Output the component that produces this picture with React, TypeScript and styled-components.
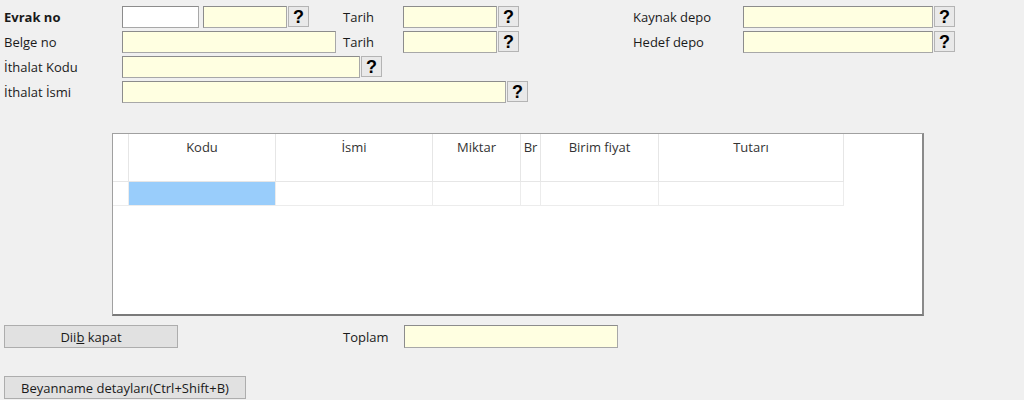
import styled, { createGlobalStyle } from "styled-components";

const GlobalStyle = createGlobalStyle`
  body {
    margin: 0;
    background: #f0f0f0;
    font-family: "Open Sans", "Noto Sans", sans-serif;
    font-size: 13px;
    color: #1a1a1a;
  }
`;

const Page = styled.div`
  width: 1024px;
  height: 400px;
  padding: 6px 0 0 4px;
  box-sizing: border-box;
  overflow: hidden;
`;

const Form = styled.div`
  display: grid;
  grid-template-columns: 118px 221px 60px 230px 110px 260px;
  grid-auto-rows: 22px;
  row-gap: 3px;
`;

const Label = styled.div<{ bold?: boolean }>`
  display: flex;
  align-items: center;
  font-weight: ${(p) => (p.bold ? 700 : 400)};
  white-space: nowrap;
`;

const Field = styled.div<{ span?: number }>`
  display: flex;
  align-items: stretch;
  grid-column: span ${(p) => p.span || 1};
`;

const Input = styled.div<{ w: number; white?: boolean; gapLeft?: number }>`
  width: ${(p) => p.w}px;
  box-sizing: border-box;
  margin-left: ${(p) => p.gapLeft || 0}px;
  background: ${(p) => (p.white ? "#ffffff" : "#ffffe1")};
  border: 1px solid #a8a8a8;
  border-top-color: #8c8c8c;
  border-left-color: #8c8c8c;
`;

const Lookup = styled.div`
  width: 21px;
  height: 21px;
  box-sizing: border-box;
  margin-left: 1px;
  background: #e9e9e9;
  border: 1px solid #b4b4b4;
  display: flex;
  align-items: center;
  justify-content: center;
  font-family: "Liberation Sans", Arial, sans-serif;
  font-weight: 700;
  font-size: 18px;
  line-height: 1;
  color: #000;
`;

const GridBox = styled.div`
  margin: 30px 0 0 108px;
  width: 812px;
  height: 183px;
  box-sizing: border-box;
  background: #fff;
  border: 1px solid #a0a0a0;
  border-bottom: 2px solid #7a7a7a;
  border-right: 2px solid #8a8a8a;
`;

const Table = styled.div`
  display: grid;
  grid-template-columns: 16px 147px 157px 88px 20px 118px 185px;
  grid-template-rows: 48px 24px;
`;

const HeadCell = styled.div`
  border-right: 1px solid #e6e6e6;
  border-bottom: 1px solid #e6e6e6;
  text-align: center;
  padding-top: 4px;
  color: #333;
  white-space: nowrap;
  overflow: hidden;
`;

const Cell = styled.div<{ selected?: boolean }>`
  border-right: 1px solid #ececec;
  border-bottom: 1px solid #ececec;
  background: ${(p) => (p.selected ? "#99cdfb" : "#fff")};
`;

const BottomRow = styled.div`
  display: flex;
  align-items: center;
  margin-top: 9px;
  height: 23px;
`;

const Button = styled.div<{ w: number }>`
  width: ${(p) => p.w}px;
  height: 23px;
  box-sizing: border-box;
  background: #e1e1e1;
  border: 1px solid #adadad;
  display: flex;
  align-items: center;
  justify-content: center;
  color: #1a1a1a;
  white-space: nowrap;
`;

const TotalLabel = styled.div`
  width: 61px;
  margin-left: 165px;
`;

const SecondRow = styled.div`
  margin-top: 28px;
`;

const columns = ["", "Kodu", "İsmi", "Miktar", "Br", "Birim fiyat", "Tutarı"];

export default function App() {
  return (
    <Page>
      <GlobalStyle />
      <Form>
        <Label bold>Evrak no</Label>
        <Field>
          <Input w={77} white />
          <Input w={84} gapLeft={4} />
          <Lookup>?</Lookup>
        </Field>
        <Label>Tarih</Label>
        <Field>
          <Input w={94} />
          <Lookup>?</Lookup>
        </Field>
        <Label>Kaynak depo</Label>
        <Field>
          <Input w={190} />
          <Lookup>?</Lookup>
        </Field>

        <Label>Belge no</Label>
        <Field>
          <Input w={214} />
        </Field>
        <Label>Tarih</Label>
        <Field>
          <Input w={94} />
          <Lookup>?</Lookup>
        </Field>
        <Label>Hedef depo</Label>
        <Field>
          <Input w={190} />
          <Lookup>?</Lookup>
        </Field>

        <Label>İthalat Kodu</Label>
        <Field span={5}>
          <Input w={238} />
          <Lookup>?</Lookup>
        </Field>

        <Label>İthalat İsmi</Label>
        <Field span={5}>
          <Input w={384} />
          <Lookup>?</Lookup>
        </Field>
      </Form>

      <GridBox>
        <Table>
          {columns.map((c, i) => (
            <HeadCell key={i}>{c}</HeadCell>
          ))}
          {columns.map((_, i) => (
            <Cell key={i} selected={i === 1} />
          ))}
        </Table>
      </GridBox>

      <BottomRow>
        <Button w={174}>
          <span>
            Dii<u>b</u> kapat
          </span>
        </Button>
        <TotalLabel>Toplam</TotalLabel>
        <Input w={214} style={{ height: 23 }} />
      </BottomRow>

      <SecondRow>
        <Button w={242}>Beyanname detayları(Ctrl+Shift+B)</Button>
      </SecondRow>
    </Page>
  );
}
